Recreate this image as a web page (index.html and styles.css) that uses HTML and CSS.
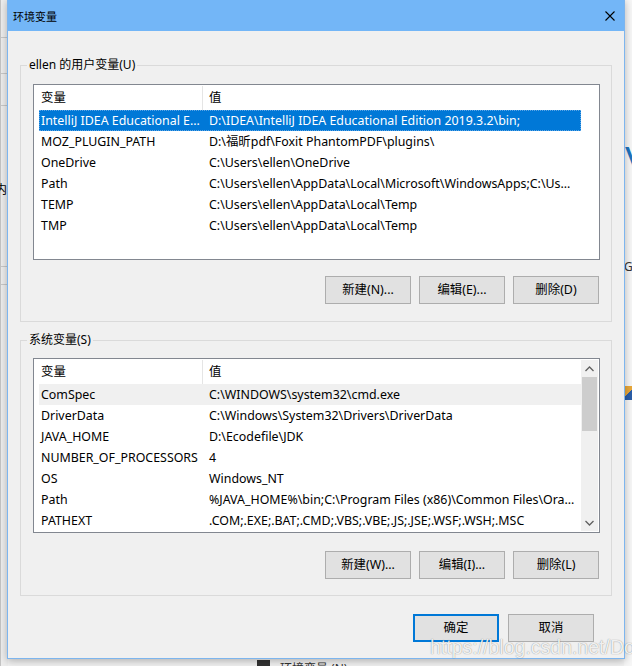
FILE: index.html
```html
<!DOCTYPE html>
<html lang="zh-CN">
<head>
<meta charset="utf-8">
<title>环境变量</title>
<link rel="stylesheet" href="styles.css">
</head>
<body>
<div class="desktop">
  <div class="bg-left">
    <div class="bg-line l1"></div>
    <div class="bg-line l2"></div>
    <div class="bg-line l3"></div>
    <div class="bg-line l4"></div>
    <div class="bg-line l5"></div>
    <span class="bg-char">内</span>
  </div>
  <div class="bg-right">
    <span class="bg-v">V</span>
    <span class="bg-g">G</span>
    <span class="bg-icon"></span>
  </div>
  <div class="bg-bottom">
    <span class="bg-task"></span>
    <span class="bg-text">环境变量 (N)</span>
  </div>

  <div class="dialog">
    <div class="titlebar">
      <span class="title">环境变量</span>
      <svg class="close" width="10" height="10" viewBox="0 0 10 10"><path d="M0.5 0.5 L9.5 9.5 M9.5 0.5 L0.5 9.5" stroke="#000" stroke-width="1.1" fill="none"/></svg>
    </div>
    <div class="body">
      <div class="group g1">
        <span class="legend">ellen 的用户变量(U)</span>
        <div class="list list1">
          <div class="list-main">
            <div class="lhead"><div class="h1">变量</div><div class="h2">值</div></div>
            <div class="row sel"><div class="c1">IntelliJ IDEA Educational Edition</div><div class="c2">D:\IDEA\IntelliJ IDEA Educational Edition 2019.3.2\bin;</div></div>
            <div class="row"><div class="c1">MOZ_PLUGIN_PATH</div><div class="c2">D:\福昕pdf\Foxit PhantomPDF\plugins\</div></div>
            <div class="row"><div class="c1">OneDrive</div><div class="c2">C:\Users\ellen\OneDrive</div></div>
            <div class="row"><div class="c1">Path</div><div class="c2">C:\Users\ellen\AppData\Local\Microsoft\WindowsApps;C:\Users\ellen\AppData</div></div>
            <div class="row"><div class="c1">TEMP</div><div class="c2">C:\Users\ellen\AppData\Local\Temp</div></div>
            <div class="row"><div class="c1">TMP</div><div class="c2">C:\Users\ellen\AppData\Local\Temp</div></div>
          </div>
        </div>
        <div class="btns">
          <button class="btn">新建(N)...</button>
          <button class="btn">编辑(E)...</button>
          <button class="btn">删除(D)</button>
        </div>
      </div>

      <div class="group g2">
        <span class="legend">系统变量(S)</span>
        <div class="list list2">
          <div class="list-main">
            <div class="lhead"><div class="h1">变量</div><div class="h2">值</div></div>
            <div class="row hl"><div class="c1">ComSpec</div><div class="c2">C:\WINDOWS\system32\cmd.exe</div></div>
            <div class="row"><div class="c1">DriverData</div><div class="c2">C:\Windows\System32\Drivers\DriverData</div></div>
            <div class="row"><div class="c1">JAVA_HOME</div><div class="c2">D:\Ecodefile\JDK</div></div>
            <div class="row"><div class="c1">NUMBER_OF_PROCESSORS</div><div class="c2">4</div></div>
            <div class="row"><div class="c1">OS</div><div class="c2">Windows_NT</div></div>
            <div class="row"><div class="c1">Path</div><div class="c2">%JAVA_HOME%\bin;C:\Program Files (x86)\Common Files\Oracle\Java\javapath</div></div>
            <div class="row"><div class="c1">PATHEXT</div><div class="c2">.COM;.EXE;.BAT;.CMD;.VBS;.VBE;.JS;.JSE;.WSF;.WSH;.MSC</div></div>
          </div>
          <div class="scrollbar">
            <div class="sb-arrow"><svg width="9" height="6" viewBox="0 0 9 6"><path d="M0.5 5 L4.5 1 L8.5 5" stroke="#606060" stroke-width="1.3" fill="none"/></svg></div>
            <div class="sb-thumb"></div>
            <div class="sb-track"></div>
            <div class="sb-arrow"><svg width="9" height="6" viewBox="0 0 9 6"><path d="M0.5 1 L4.5 5 L8.5 1" stroke="#606060" stroke-width="1.3" fill="none"/></svg></div>
          </div>
        </div>
        <div class="btns btns2">
          <button class="btn">新建(W)...</button>
          <button class="btn">编辑(I)...</button>
          <button class="btn">删除(L)</button>
        </div>
      </div>

      <div class="footer">
        <button class="btn ok">确定</button>
        <button class="btn">取消</button>
      </div>
    </div>
  </div>

  <div class="watermark">https://blog.csdn.net/Don_n</div>
</div>
</body>
</html>
```

FILE: styles.css
```css
* { box-sizing: border-box; }
html, body { margin: 0; padding: 0; }
body {
  width: 632px;
  height: 666px;
  overflow: hidden;
  background: #f0f0f0;
  font-family: "Noto Sans", "Noto Sans CJK SC", sans-serif;
  font-size: 12.4px;
  color: #000;
}
.desktop {
  position: relative;
  width: 632px;
  height: 666px;
  overflow: hidden;
  background: #f2f2f2;
}

/* background windows peeking out */
.bg-left {
  position: absolute;
  left: 0; top: 0;
  width: 8px; height: 666px;
  background: #eeeeee;
  border-left: 1px solid #c4c4c4;
}
.bg-line { position: absolute; left: 0; width: 8px; height: 1px; background: #c8c8c8; }
.bg-line.l1 { top: 37px; }
.bg-line.l2 { top: 73px; }
.bg-line.l3 { top: 105px; }
.bg-line.l4 { top: 266px; }
.bg-line.l5 { top: 284px; }
.bg-char { position: absolute; left: -6px; top: 180px; font-size: 12px; font-family: "Noto Sans CJK SC", sans-serif; }
.bg-right {
  position: absolute;
  right: 0; top: 0;
  width: 8px; height: 666px;
  background: #f7f7f7;
}
.bg-v { position: absolute; left: 1px; top: 140px; font: 36px "Liberation Sans", sans-serif; color: #1e73be; }
.bg-g { position: absolute; left: 0; top: 258px; font: 12px "Noto Sans", sans-serif; color: #333; }
.bg-icon { position: absolute; left: 0; top: 386px; width: 8px; height: 14px; background: linear-gradient(135deg, #e9a83a 50%, #2b5ea8 50%); }
.bg-bottom {
  position: absolute;
  left: 0; bottom: 0;
  width: 632px; height: 8px;
  overflow: hidden;
}
.bg-task { position: absolute; left: 257px; top: 2px; width: 13px; height: 6px; background: #333; }
.bg-text { position: absolute; left: 280px; top: 1px; font-size: 12px; color: #333; }

/* dialog */
.dialog {
  position: absolute;
  left: 7px;
  top: -1px;
  width: 618px;
  height: 660px;
  border: 1px solid #7db5ee;
  background: #f0f0f0;
  box-shadow: 0 2px 8px rgba(0,0,0,0.28);
  display: flex;
  flex-direction: column;
}
.titlebar {
  height: 31px;
  background: #73b6f7;
  display: flex;
  align-items: center;
  justify-content: space-between;
  padding: 0 9px 0 5px;
  flex-shrink: 0;
}
.title {
  font-family: "Noto Sans CJK SC", sans-serif;
  font-size: 11px;
  line-height: 16px;
}
.close { display: block; margin-top: 1px; }

.body {
  flex: 1;
  padding: 34px 12px 0 12px;
  display: flex;
  flex-direction: column;
}

.group {
  position: relative;
  border: 1px solid #dadada;
  padding: 18px 11px 17px 12px;
}
.group.g2 {
  margin-top: 18px;
  padding: 17px 11px 16px 12px;
}
.legend {
  position: absolute;
  left: 6px;
  top: -9px;
  padding: 0 2px;
  line-height: 16px;
  background: #f0f0f0;
  font-size: 12px;
}

.list {
  border: 1px solid #828790;
  padding: 1px;
  background: #fff;
  display: flex;
}
.list1 { height: 176px; }
.list2 { height: 175px; }
.list-main { flex: 1; overflow: hidden; }

.lhead {
  height: 24px;
  display: flex;
  line-height: 24px;
}
.h1 {
  width: 168px;
  padding-left: 6px;
  border-right: 1px solid #e5e5e5;
}
.h2 { padding-left: 6px; }

.row {
  margin-left: 4px;
  width: 542px;
  height: 21px;
  line-height: 21px;
  display: flex;
}
.c1, .c2 {
  white-space: nowrap;
  overflow: hidden;
  text-overflow: ellipsis;
}
.c1 { width: 163px; padding-left: 2px; padding-right: 2px; }
.c2 { width: 379px; padding-left: 7px; padding-right: 6px; }
.row.sel {
  background: #0078d7;
  color: #fff;
  outline: 1px dotted #5da5e5;
  outline-offset: -1px;
}
.row.hl { background: #f0f0f0; }

.scrollbar {
  width: 17px;
  background: #f0f0f0;
  display: flex;
  flex-direction: column;
}
.sb-arrow {
  height: 17px;
  display: flex;
  align-items: center;
  justify-content: center;
}
.sb-thumb {
  height: 54px;
  margin: 0 1px;
  background: #cdcdcd;
}
.sb-track { flex: 1; }

.btns {
  margin-top: 16px;
  display: flex;
  justify-content: flex-end;
  gap: 8px;
  padding-right: 1px;
}
.btns2 { margin-top: 18px; }
.btn {
  width: 86px;
  height: 28px;
  border: 1px solid #adadad;
  background: #e1e1e1;
  font-family: "Noto Sans", "Noto Sans CJK SC", sans-serif;
  font-size: 12.4px;
  color: #000;
  padding: 0;
  line-height: 26px;
}
.btn.ok {
  border: 2px solid #0078d7;
  line-height: 24px;
}
.footer {
  margin-top: 18px;
  display: flex;
  justify-content: flex-end;
  gap: 9px;
  padding-right: 18px;
}

.watermark {
  position: absolute;
  left: 430px;
  top: 636px;
  font-family: "Liberation Sans", sans-serif;
  font-size: 19.5px;
  color: rgba(255,255,255,0.9);
  text-shadow: 0 0 1px rgba(0,0,0,0.5);
  white-space: nowrap;
  pointer-events: none;
}
```
